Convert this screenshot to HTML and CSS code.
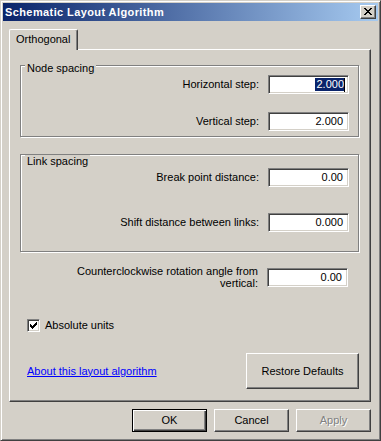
FILE: index.html
```html
<!DOCTYPE html>
<html>
<head>
<meta charset="utf-8">
<link rel="stylesheet" href="styles.css">
</head>
<body>
<div class="window">
  <div class="titlebar">
    <span class="title">Schematic Layout Algorithm</span>
    <div class="close">
      <svg width="8" height="7" viewBox="0 0 8 7" shape-rendering="crispEdges">
        <rect x="0" y="0" width="2" height="1"/><rect x="6" y="0" width="2" height="1"/>
        <rect x="1" y="1" width="2" height="1"/><rect x="5" y="1" width="2" height="1"/>
        <rect x="2" y="2" width="4" height="1"/>
        <rect x="3" y="3" width="2" height="1"/>
        <rect x="2" y="4" width="4" height="1"/>
        <rect x="1" y="5" width="2" height="1"/><rect x="5" y="5" width="2" height="1"/>
        <rect x="0" y="6" width="2" height="1"/><rect x="6" y="6" width="2" height="1"/>
      </svg>
    </div>
  </div>
  <div class="client">
    <div class="tabs"><div class="tab">Orthogonal</div></div>
    <div class="panel">
      <div class="group group-node">
        <div class="group-title">Node spacing</div>
        <div class="row"><span class="label">Horizontal step:</span><div class="field"><span class="sel">2.000</span><span class="caret"></span></div></div>
        <div class="row row-second"><span class="label">Vertical step:</span><div class="field">2.000</div></div>
      </div>
      <div class="group group-link">
        <div class="group-title">Link spacing</div>
        <div class="row"><span class="label">Break point distance:</span><div class="field">0.00</div></div>
        <div class="row row-second"><span class="label">Shift distance between links:</span><div class="field">0.000</div></div>
      </div>
      <div class="row row-ccw"><span class="label label-wrap">Counterclockwise rotation angle from vertical:</span><div class="field">0.00</div></div>
      <div class="check-row">
        <span class="checkbox">
          <svg width="7" height="7" viewBox="0 0 7 7" shape-rendering="crispEdges">
            <rect x="6" y="0" width="1" height="1"/>
            <rect x="5" y="1" width="2" height="1"/>
            <rect x="0" y="2" width="1" height="1"/><rect x="4" y="2" width="3" height="1"/>
            <rect x="0" y="3" width="2" height="1"/><rect x="3" y="3" width="3" height="1"/>
            <rect x="0" y="4" width="5" height="1"/>
            <rect x="1" y="5" width="3" height="1"/>
            <rect x="2" y="6" width="1" height="1"/>
          </svg>
        </span>
        <span class="check-label">Absolute units</span>
      </div>
      <div class="bottom-row">
        <a class="link" href="#">About this layout algorithm</a>
        <button class="btn btn-restore">Restore Defaults</button>
      </div>
    </div>
    <div class="buttons">
      <button class="btn btn-default">OK</button>
      <button class="btn">Cancel</button>
      <button class="btn btn-disabled">Apply</button>
    </div>
  </div>
</div>
</body>
</html>
```
FILE: styles.css
```css
html, body {
  margin: 0;
  padding: 0;
  background: #d4d0c8;
}
body {
  font-family: "Liberation Sans", Arial, sans-serif;
  font-size: 11px;
  color: #000;
}
.window {
  width: 381px;
  height: 441px;
  box-sizing: border-box;
  background: #d4d0c8;
  border: 1px solid;
  border-color: #d4d0c8 #404040 #404040 #d4d0c8;
  box-shadow: inset 1px 1px #fff, inset -1px -1px #808080;
  padding: 2px;
}
.titlebar {
  height: 18px;
  background: linear-gradient(to right, #0a246a, #a6caf0);
  display: flex;
  align-items: center;
  justify-content: space-between;
  padding: 0 2px 0 2px;
}
.title {
  color: #fff;
  font-weight: bold;
  font-size: 11px;
  letter-spacing: 0.4px;
  line-height: 13px;
}
.close {
  width: 16px;
  height: 14px;
  box-sizing: border-box;
  background: #d4d0c8;
  border: 1px solid;
  border-color: #fff #404040 #404040 #fff;
  box-shadow: inset -1px -1px #808080;
  display: flex;
  align-items: center;
  justify-content: center;
  padding: 0 1px 1px 0;
}
.close svg { display: block; fill: #000; }
.client {
  padding: 8px 7px 0 6px;
}
.tabs {
  display: flex;
  height: 20px;
}
.tab {
  position: relative;
  z-index: 1;
  width: 69px;
  height: 21px;
  box-sizing: border-box;
  background: #d4d0c8;
  border-left: 1px solid #fff;
  border-top: 1px solid #fff;
  border-right: 1px solid #404040;
  border-radius: 2px 2px 0 0;
  box-shadow: inset -1px 0 #808080;
  padding: 3px 0 0 6px;
  line-height: 13px;
}
.panel {
  height: 353px;
  box-sizing: border-box;
  border: 1px solid;
  border-color: #fff #404040 #404040 #fff;
  border-bottom-width: 1px;
  box-shadow: inset -1px -1px #808080;
  padding: 15px 11px 0 10px;
}
.group {
  border: 1px solid #808080;
  box-shadow: 1px 1px #fff, inset 1px 1px #fff;
}
.group-title {
  display: table;
  margin: -7px 0 0 4px;
  padding: 0 2px;
  background: #d4d0c8;
  line-height: 13px;
}
.group-node {
  padding: 3px 0 5px 0;
}
.group-link {
  margin-top: 17px;
  padding: 7px 0 19px 0;
}
.row {
  display: flex;
  justify-content: flex-end;
  align-items: center;
  gap: 9px;
  padding-right: 9px;
}
.group-node .row-second { margin-top: 18px; }
.group-link .row-second { margin-top: 26px; }
.label {
  line-height: 13px;
  text-align: right;
}
.field {
  width: 81px;
  height: 19px;
  box-sizing: border-box;
  background: #fff;
  border: 1px solid;
  border-color: #808080 #fff #fff #808080;
  box-shadow: inset 1px 1px #404040, inset -1px -1px #d4d0c8;
  text-align: right;
  padding: 0 5px 0 2px;
  line-height: 17px;
  display: flex;
  justify-content: flex-end;
  align-items: center;
}
.sel {
  background: #0a246a;
  color: #fff;
  line-height: 13px;
  padding-left: 1px;
}
.caret {
  width: 1px;
  height: 14px;
  background: #000;
  margin-right: -2px;
}
.row-ccw {
  margin-top: 13px;
  padding-right: 11px;
}
.label-wrap {
  width: 196px;
  line-height: 12px;
}
.check-row {
  display: flex;
  align-items: center;
  gap: 5px;
  margin-top: 30px;
  padding-left: 7px;
  line-height: 13px;
}
.checkbox {
  width: 13px;
  height: 13px;
  box-sizing: border-box;
  background: #fff;
  border: 1px solid;
  border-color: #808080 #fff #fff #808080;
  box-shadow: inset 1px 1px #404040, inset -1px -1px #d4d0c8;
  display: flex;
  align-items: center;
  justify-content: center;
}
.checkbox svg { display: block; fill: #000; }
.bottom-row {
  display: flex;
  justify-content: space-between;
  align-items: center;
  margin-top: 21px;
  padding-left: 7px;
}
.link {
  color: #0000ff;
  text-decoration: underline;
  line-height: 13px;
}
.btn {
  font-family: "Liberation Sans", Arial, sans-serif;
  font-size: 11px;
  color: #000;
  background: #d4d0c8;
  border: 1px solid;
  border-color: #fff #404040 #404040 #fff;
  box-shadow: inset -1px -1px #808080;
  border-radius: 0;
  padding: 0;
  margin: 0;
  width: 75px;
  height: 23px;
  box-sizing: border-box;
  line-height: 13px;
}
.btn-restore {
  width: 113px;
  height: 36px;
}
.buttons {
  display: flex;
  justify-content: flex-end;
  gap: 7px;
  margin-top: 7px;
}
.btn-default {
  border: 1px solid #000;
  box-shadow: inset 1px 1px #fff, inset -1px -1px #404040, inset -2px -2px #808080;
}
.btn-disabled {
  color: #808080;
  text-shadow: 1px 1px #fff;
}
```
